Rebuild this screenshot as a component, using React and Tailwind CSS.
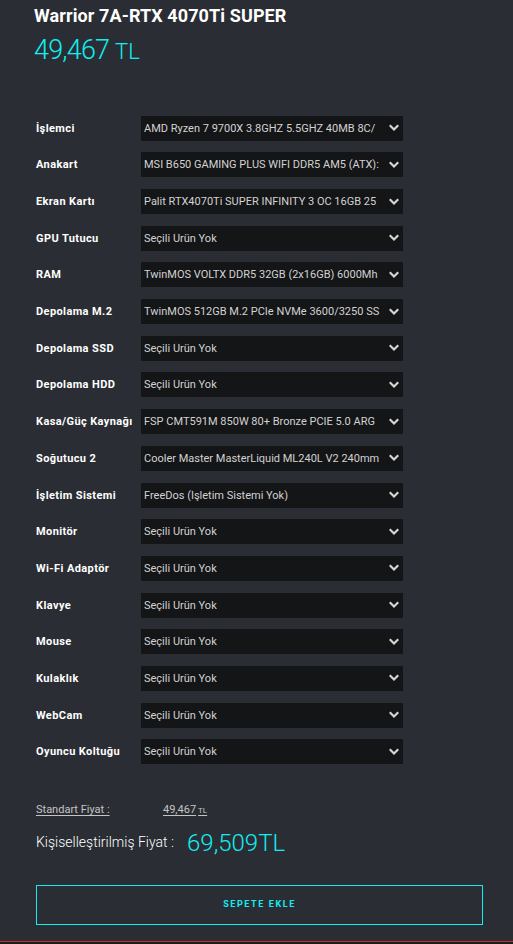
import React from "react";

const rows = [
  ["İşlemci", "AMD Ryzen 7 9700X 3.8GHZ 5.5GHZ 40MB 8C/"],
  ["Anakart", "MSI B650 GAMING PLUS WIFI DDR5 AM5 (ATX):"],
  ["Ekran Kartı", "Palit RTX4070Ti SUPER INFINITY 3 OC 16GB 25"],
  ["GPU Tutucu", "Seçili Ürün Yok"],
  ["RAM", "TwinMOS VOLTX DDR5 32GB (2x16GB) 6000Mh"],
  ["Depolama M.2", "TwinMOS 512GB M.2 PCIe NVMe 3600/3250 SS"],
  ["Depolama SSD", "Seçili Ürün Yok"],
  ["Depolama HDD", "Seçili Ürün Yok"],
  ["Kasa/Güç Kaynağı", "FSP CMT591M 850W 80+ Bronze PCIE 5.0 ARG"],
  ["Soğutucu 2", "Cooler Master MasterLiquid ML240L V2 240mm"],
  ["İşletim Sistemi", "FreeDos (İşletim Sistemi Yok)"],
  ["Monitör", "Seçili Ürün Yok"],
  ["Wi-Fi Adaptör", "Seçili Ürün Yok"],
  ["Klavye", "Seçili Ürün Yok"],
  ["Mouse", "Seçili Ürün Yok"],
  ["Kulaklık", "Seçili Ürün Yok"],
  ["WebCam", "Seçili Ürün Yok"],
  ["Oyuncu Koltuğu", "Seçili Ürün Yok"],
];

function Chevron() {
  return (
    <svg width="10" height="8" viewBox="0 0 10 8" className="shrink-0">
      <polyline points="1.5,2 5,5.5 8.5,2" fill="none" stroke="#d6d6d6" strokeWidth="2.2" strokeLinecap="square" />
    </svg>
  );
}

export default function App() {
  return (
    <div className="w-[513px] h-[944px] bg-[#2a2d33] flex flex-col overflow-hidden" style={{ fontFamily: "Roboto, 'Liberation Sans', sans-serif" }}>
      <div className="pl-[34px] pr-[30px] flex flex-col flex-1">
        <div className="mt-[6px] text-[18px] leading-[20px] font-bold text-white tracking-[0.1px]">Warrior 7A-RTX 4070Ti SUPER</div>
        <div className="mt-[8px] text-[27px] leading-[32px] font-light text-[#12eef0] tracking-[-0.8px]">49,467 <span className="text-[22px] tracking-normal">TL</span></div>
        <div className="mt-[41.8px] flex flex-col pl-[2px]">
          {rows.map(([label, value]) => (
            <div key={label} className="h-[36.7px] flex items-center">
              <div className="w-[105px] text-[11px] font-bold text-white leading-none tracking-[0.4px]">{label}</div>
              <div className="w-[262px] h-[25px] bg-[#141517] flex items-center pl-[3px] pr-[4px] gap-[2px]">
                <div className="flex-1 overflow-hidden whitespace-nowrap text-[11px] text-[#d2d2d2] leading-none">{value}</div>
                <Chevron />
              </div>
            </div>
          ))}
        </div>
        <div className="mt-[32.5px] pl-[2px] h-[16px] flex items-center text-[11px] text-[#c4c4c4]">
          <span className="w-[127px] underline underline-offset-2">Standart Fiyat :</span>
          <span className="underline underline-offset-2">49,467<span className="text-[8px] ml-[2px]">TL</span></span>
        </div>
        <div className="mt-[10px] pl-[2px] h-[28px] flex items-center">
          <span className="text-[14px] font-light text-white w-[151px]">Kişiselleştirilmiş Fiyat :</span>
          <span className="text-[24px] font-light text-[#12eef0] leading-none">69,509TL</span>
        </div>
        <div className="mt-[28px] ml-[2px] h-[40px] border border-[#12eef0] flex items-center justify-center text-[9px] font-bold text-[#12eef0] tracking-[1.6px]">
          SEPETE EKLE
        </div>
      </div>
      <div className="h-[1px] bg-[#c0392b]" />
      <div className="h-[2px] bg-[#1c1c1c]" />
    </div>
  );
}
